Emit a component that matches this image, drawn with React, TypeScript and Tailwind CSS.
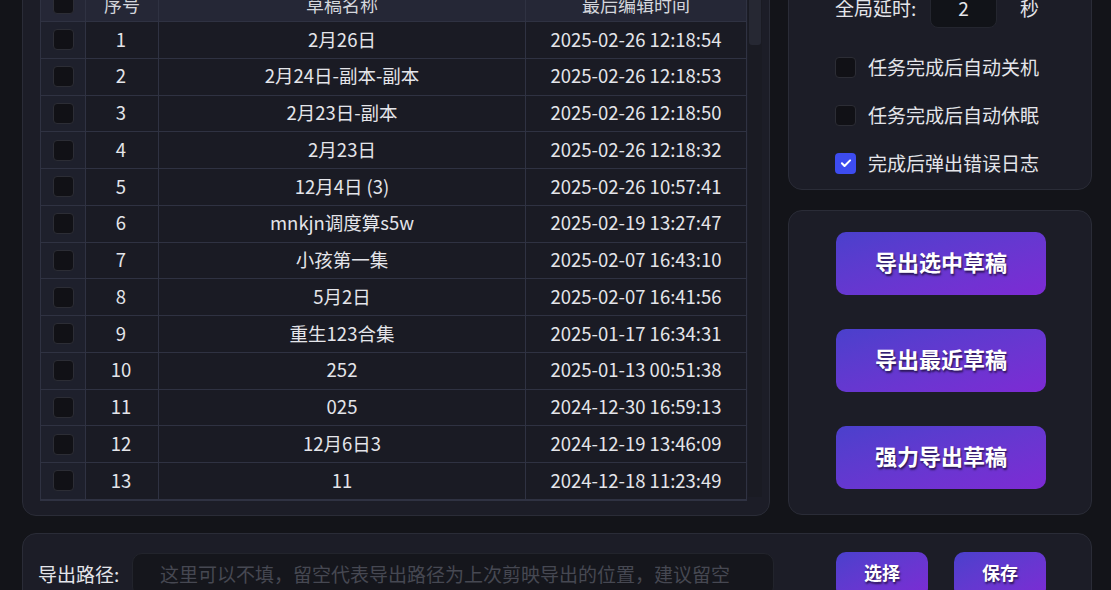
import React from "react";

const rows: [string, string, string][] = [
  ["1", "2月26日", "2025-02-26 12:18:54"],
  ["2", "2月24日-副本-副本", "2025-02-26 12:18:53"],
  ["3", "2月23日-副本", "2025-02-26 12:18:50"],
  ["4", "2月23日", "2025-02-26 12:18:32"],
  ["5", "12月4日 (3)", "2025-02-26 10:57:41"],
  ["6", "mnkjn调度算s5w", "2025-02-19 13:27:47"],
  ["7", "小孩第一集", "2025-02-07 16:43:10"],
  ["8", "5月2日", "2025-02-07 16:41:56"],
  ["9", "重生123合集", "2025-01-17 16:34:31"],
  ["10", "252", "2025-01-13 00:51:38"],
  ["11", "025", "2024-12-30 16:59:13"],
  ["12", "12月6日3", "2024-12-19 13:46:09"],
  ["13", "11", "2024-12-18 11:23:49"],
];

function Box({ checked = false }: { checked?: boolean }) {
  if (checked) {
    return (
      <div className="w-[21px] h-[21px] rounded-[4px] bg-[#3d4cf0] flex items-center justify-center">
        <svg width="14" height="14" viewBox="0 0 24 24" fill="none" stroke="white" strokeWidth="3.5" strokeLinecap="round" strokeLinejoin="round">
          <path d="M5 12.5l4.5 4.5L19 7.5" />
        </svg>
      </div>
    );
  }
  return <div className="w-[21px] h-[21px] rounded-[4px] bg-[#111116] border border-[#2c2d35]" />;
}

function GradBtn({ children, className }: { children: React.ReactNode; className: string }) {
  return (
    <div
      className={
        "rounded-[10px] bg-gradient-to-br from-[#4a40cc] to-[#7d2ad4] flex items-center justify-center text-white font-bold [text-shadow:1px_2px_2px_rgba(0,0,0,0.6)] " +
        className
      }
    >
      {children}
    </div>
  );
}

export default function App() {
  return (
    <div
      className="w-[1111px] h-[590px] overflow-hidden bg-[#131419] text-[#e4e5ea]"
      style={{ fontFamily: '"Noto Sans CJK SC", "Noto Sans", sans-serif' }}
    >
      <div className="-mt-[33px] pl-[22px] pr-[19px] flex flex-col gap-[17px]">
        <div className="flex gap-[18px]">
          {/* left panel */}
          <div className="w-[748px] h-[549px] rounded-[14px] bg-[#1c1d27] border border-[#2a2c37] pl-[17px] pt-[17px] flex">
            <div className="w-[707px] border border-[#2f3242] border-r-0 self-start">
              <div className="grid grid-cols-[45px_73px_367px_221px] h-[36px] bg-[#252736] border-b border-[#2f3242] text-[18px] text-[#d4d6dc]">
                <div className="border-r border-[#2f3242] flex items-center justify-center">
                  <Box />
                </div>
                <div className="border-r border-[#2f3242] flex items-center justify-center pt-[2px]">序号</div>
                <div className="border-r border-[#2f3242] flex items-center justify-center pt-[2px]">草稿名称</div>
                <div className="border-r border-[#2f3242] flex items-center justify-center pt-[2px]">最后编辑时间</div>
              </div>
              {rows.map((r) => (
                <div
                  key={r[0]}
                  className="grid grid-cols-[45px_73px_367px_221px] h-[36.75px] bg-[#1a1b24] border-b border-[#2f3242] text-[18.5px]"
                >
                  <div className="border-r border-[#2f3242] bg-[#1e202c] flex items-center justify-center">
                    <Box />
                  </div>
                  <div className="border-r border-[#2f3242] flex items-center justify-center pr-[2px] pb-[1px]">{r[0]}</div>
                  <div className="border-r border-[#2f3242] flex items-center justify-center pb-[1px]">{r[1]}</div>
                  <div className="border-r border-[#2f3242] flex items-center justify-center pb-[1px]">{r[2]}</div>
                </div>
              ))}
            </div>
            <div className="w-[14px] h-[512px] bg-[#1a1b23] ml-[1px] pt-[2px] px-[1px]">
              <div className="h-[58px] rounded-[3px] bg-[#262833]" />
            </div>
          </div>

          {/* right column */}
          <div className="w-[304px] flex flex-col gap-[20px]">
            <div className="h-[223px] rounded-[14px] bg-[#1c1d27] border border-[#2a2c37] pl-[46px] pt-[20px]">
              <div className="flex items-center h-[40px] text-[19px]">
                <span className="w-[95px]">全局延时:</span>
                <div className="w-[67px] h-[40px] rounded-[8px] bg-[#111318] border border-[#24262f] flex items-center justify-center">2</div>
                <span className="ml-[23px]">秒</span>
              </div>
              <div className="mt-[15px] flex flex-col text-[19px]">
                <div className="h-[48px] flex items-center gap-[12px]">
                  <Box />
                  <span>任务完成后自动关机</span>
                </div>
                <div className="h-[48px] flex items-center gap-[12px]">
                  <Box />
                  <span>任务完成后自动休眠</span>
                </div>
                <div className="h-[48px] flex items-center gap-[12px]">
                  <Box checked />
                  <span>完成后弹出错误日志</span>
                </div>
              </div>
            </div>
            <div className="h-[305px] rounded-[14px] bg-[#1c1d27] border border-[#2a2c37] pl-[47px] pt-[21px] flex flex-col gap-[34px]">
              <GradBtn className="w-[210px] h-[63px] text-[22px] pb-[4px]">导出选中草稿</GradBtn>
              <GradBtn className="w-[210px] h-[63px] text-[22px] pb-[4px]">导出最近草稿</GradBtn>
              <GradBtn className="w-[210px] h-[63px] text-[22px] pb-[4px]">强力导出草稿</GradBtn>
            </div>
          </div>
        </div>

        {/* bottom panel */}
        <div className="h-[90px] rounded-[14px] bg-[#1c1d27] border border-[#2a2c37] pl-[15px] pt-[19px] flex items-start">
          <div className="h-[44px] flex items-center w-[94px] text-[19px] pb-[2px]">导出路径:</div>
          <div className="w-[642px] h-[44px] rounded-[10px] bg-[#15161c] border border-[#22242c] flex items-center pl-[27px] pb-[2px] text-[19px] text-[#464852]">
            这里可以不填，留空代表导出路径为上次剪映导出的位置，建议留空
          </div>
          <GradBtn className="ml-[62px] w-[92px] h-[46px] text-[18px] -mt-[1px] pb-[5px]">选择</GradBtn>
          <GradBtn className="ml-[26px] w-[92px] h-[46px] text-[18px] -mt-[1px] pb-[5px]">保存</GradBtn>
        </div>
      </div>
    </div>
  );
}
